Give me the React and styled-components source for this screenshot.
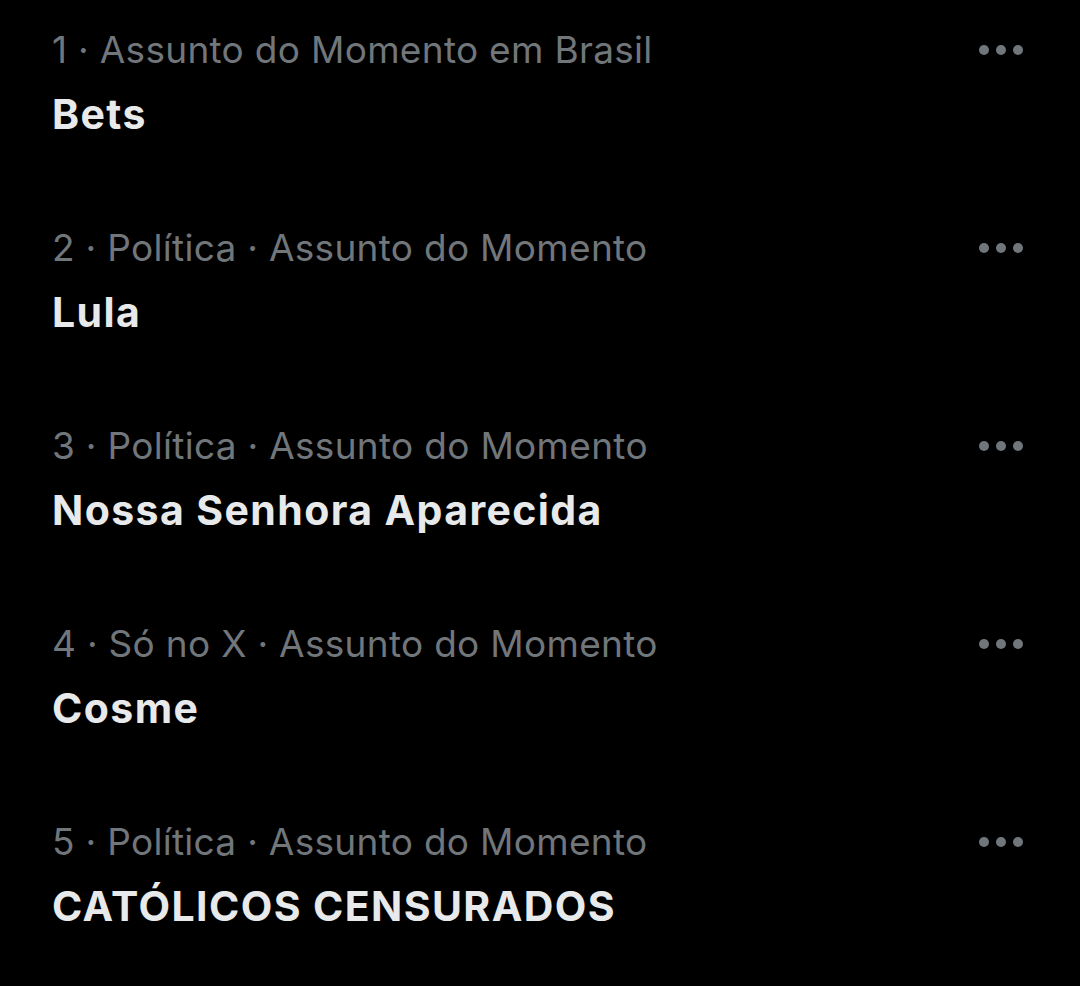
import React from 'react'
import styled, { createGlobalStyle } from 'styled-components'

const Global = createGlobalStyle`
  html, body {
    margin: 0;
    background: #000;
  }
  body {
    font-family: Inter, Roboto, sans-serif;
  }
`

const List = styled.section`
  width: 1080px;
  height: 986px;
  background: #000;
  overflow: hidden;
`

const Trend = styled.div`
  display: flex;
  align-items: flex-start;
  justify-content: space-between;
  padding: 26px 55px 59px 52px;
`

const Content = styled.div`
  display: flex;
  flex-direction: column;
`

const Meta = styled.div`
  color: #71767b;
  font-size: 37px;
  line-height: 48px;
  letter-spacing: 0.3px;
  white-space: nowrap;
`

const Title = styled.div`
  color: #e7e9ea;
  font-size: 41px;
  font-weight: 700;
  line-height: 50px;
  letter-spacing: 1.4px;
  margin-top: 15px;
  white-space: nowrap;
`

const More = styled.button`
  display: flex;
  align-items: center;
  height: 48px;
  padding: 0;
  border: 0;
  background: none;
  color: #71767b;
`

const Dots = () => (
  <svg width="48" height="12" viewBox="0 0 48 12">
    <circle cx="7" cy="6" r="5" fill="currentColor" />
    <circle cx="24" cy="6" r="5" fill="currentColor" />
    <circle cx="41" cy="6" r="5" fill="currentColor" />
  </svg>
)

const trends = [
  { meta: '1 · Assunto do Momento em Brasil', title: 'Bets' },
  { meta: '2 · Política · Assunto do Momento', title: 'Lula' },
  { meta: '3 · Política · Assunto do Momento', title: 'Nossa Senhora Aparecida' },
  { meta: '4 · Só no X · Assunto do Momento', title: 'Cosme' },
  { meta: '5 · Política · Assunto do Momento', title: 'CATÓLICOS CENSURADOS' },
]

const App = () => (
  <List>
    <Global />
    {trends.map(t => (
      <Trend key={t.title}>
        <Content>
          <Meta>{t.meta}</Meta>
          <Title>{t.title}</Title>
        </Content>
        <More>
          <Dots />
        </More>
      </Trend>
    ))}
  </List>
)

export default App
